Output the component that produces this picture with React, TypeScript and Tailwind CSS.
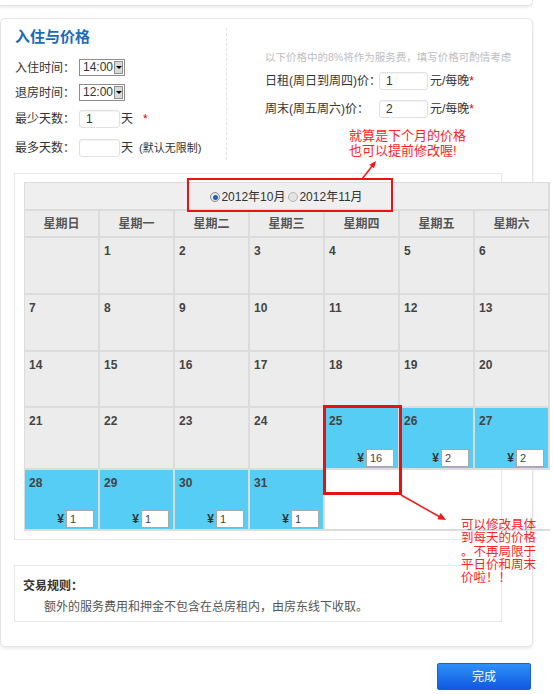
import React from 'react';

type Cell = { d?: number; price?: string; kind: 'gray' | 'blue' | 'empty' };

const weekdays = ['星期日', '星期一', '星期二', '星期三', '星期四', '星期五', '星期六'];

const g = (d?: number): Cell => ({ d, kind: 'gray' });
const b = (d: number, price: string): Cell => ({ d, price, kind: 'blue' });
const e = (): Cell => ({ kind: 'empty' });

const rows: { h: string; cells: Cell[] }[] = [
  { h: 'h-[57px]', cells: [g(), g(1), g(2), g(3), g(4), g(5), g(6)] },
  { h: 'h-[57px]', cells: [g(7), g(8), g(9), g(10), g(11), g(12), g(13)] },
  { h: 'h-[56px]', cells: [g(14), g(15), g(16), g(17), g(18), g(19), g(20)] },
  { h: 'h-[62px]', cells: [g(21), g(22), g(23), g(24), b(25, '16'), b(26, '2'), b(27, '2')] },
  { h: 'h-[61px]', cells: [b(28, '1'), b(29, '1'), b(30, '1'), b(31, '1'), e(), e(), e()] },
];

function FakeSelect({ value }: { value: string }) {
  return (
    <div className="flex h-[17px] w-[46px] items-stretch border border-[#8c8c8c] bg-white">
      <span className="flex-1 pl-[3px] text-[12px] leading-[15px] text-[#333]">{value}</span>
      <span className="m-[1px] flex w-[12px] items-center justify-center border border-[#8f8f8f] bg-[#d9d9d9]">
        <span className="h-0 w-0 border-x-[3px] border-t-[3px] border-x-transparent border-t-black" />
      </span>
    </div>
  );
}

function TextBox({ value, w }: { value?: string; w: string }) {
  return (
    <div
      className={`${w} h-[18px] rounded-[3px] border border-[#e1e1e1] bg-white pl-[6px] text-[12px] leading-[16px] text-[#333] shadow-[inset_0_1px_1px_rgba(0,0,0,0.05)]`}
    >
      {value}
    </div>
  );
}

function Radio({ checked }: { checked?: boolean }) {
  return (
    <span
      className={`flex h-[10px] w-[10px] items-center justify-center rounded-full border ${
        checked ? 'border-[#8a8a8a] bg-[#e8e8e8]' : 'border-[#b5b5b5] bg-[#e4e4e4]'
      }`}
    >
      {checked && <span className="h-[5px] w-[5px] rounded-full bg-[#1d5fb8]" />}
    </span>
  );
}

function DayCell({ cell }: { cell: Cell }) {
  if (cell.kind === 'empty') {
    return <div className="w-[75px] border-b-2 border-[#dcdcdc]" />;
  }
  const bg = cell.kind === 'blue' ? 'bg-[#55cdf4]' : 'bg-[#ececec]';
  return (
    <div className={`flex w-[75px] flex-col justify-between border-b-2 border-r-2 border-[#dcdcdc] ${bg}`}>
      <span className="pl-[4px] pt-[6px] text-[12px] font-bold leading-[14px] text-[#444]">{cell.d}</span>
      {cell.price && (
        <div className="flex items-center justify-end gap-[2px] pb-[1px] pr-[4px]">
          <span className="text-[12px] font-bold text-[#333]">¥</span>
          <div className="h-[18px] w-[28px] border border-[#a9a9a9] bg-white pl-[3px] text-[11px] leading-[16px] text-[#444]">
            {cell.price}
          </div>
        </div>
      )}
    </div>
  );
}

export default function App() {
  return (
    <div className="relative h-[694px] w-[553px] overflow-hidden bg-white font-['Liberation_Sans','Noto_Sans_CJK_SC',sans-serif] text-[12px] text-[#333]">
      <div className="h-[6px] w-[533px] rounded-br-[5px] border-b border-r border-[#e2e2e2] shadow-[0_2px_2px_rgba(0,0,0,0.06)]" />

      <div className="mt-[12px] h-[629px] w-[533px] rounded-[5px] border border-[#e4e4e4] shadow-[0_2px_3px_rgba(0,0,0,0.08)]">
        {/* 入住与价格 */}
        <div className="flex h-[154px] pl-[14px]">
          <div className="flex w-[211px] flex-col pt-[8px]">
            <h2 className="h-[20px] text-[15px] font-bold leading-[20px] text-[#1d6bb3]">入住与价格</h2>
            <div className="mt-[12px] flex h-[17px] items-center">
              <span className="w-[64px]">入住时间：</span>
              <FakeSelect value="14:00" />
            </div>
            <div className="mt-[8px] flex h-[17px] items-center">
              <span className="w-[64px]">退房时间：</span>
              <FakeSelect value="12:00" />
            </div>
            <div className="mt-[9px] flex h-[18px] items-center">
              <span className="w-[64px]">最少天数：</span>
              <TextBox value="1" w="w-[41px]" />
              <span className="ml-[1px]">天</span>
              <span className="ml-[10px] text-[#e60000]">*</span>
            </div>
            <div className="mt-[11px] flex h-[18px] items-center">
              <span className="w-[64px]">最多天数：</span>
              <TextBox w="w-[41px]" />
              <span className="ml-[1px]">天</span>
              <span className="ml-[6px] text-[11px]">(默认无限制)</span>
            </div>
          </div>
          <div className="mt-[9px] h-[132px] border-l border-dashed border-[#e2e2e2]" />
          <div className="flex flex-col pl-[38px] pt-[31px]">
            <p className="h-[14px] whitespace-nowrap text-[10.5px] leading-[14px] text-[#bdbdbd]">
              以下价格中的8%将作为服务费，填写价格可酌情考虑
            </p>
            <div className="mt-[8px] flex h-[18px] items-center whitespace-nowrap">
              <span className="w-[114px]">日租(周日到周四)价：</span>
              <TextBox value="1" w="w-[49px]" />
              <span className="ml-[2px]">元/每晚</span>
              <span className="text-[#e60000]">*</span>
            </div>
            <div className="mt-[10px] flex h-[18px] items-center whitespace-nowrap">
              <span className="w-[114px]">周末(周五周六)价：</span>
              <TextBox value="2" w="w-[49px]" />
              <span className="ml-[2px]">元/每晚</span>
              <span className="text-[#e60000]">*</span>
            </div>
          </div>
        </div>

        {/* calendar */}
        <div className="ml-[13px] h-[367px] w-[488px] border border-[#e6e6e6] pl-[9px] pt-[8px]">
          <div className="w-[526px] border-l border-t border-[#dcdcdc]">
            <div className="flex h-[28px] items-start justify-center border-b-2 border-r-2 border-[#dcdcdc] bg-[#efefef] pt-[7px]">
              <label className="flex items-center gap-[1px]">
                <Radio checked />
                <span className="leading-[14px]">2012年10月</span>
              </label>
              <label className="ml-[3px] flex items-center gap-[1px]">
                <Radio />
                <span className="leading-[14px]">2012年11月</span>
              </label>
            </div>
            <div className="flex h-[27px]">
              {weekdays.map(w => (
                <div
                  key={w}
                  className="flex w-[75px] items-center justify-center border-b-2 border-r-2 border-[#dcdcdc] bg-[#ececec] font-bold text-[#555]"
                >
                  {w}
                </div>
              ))}
            </div>
            {rows.map((r, i) => (
              <div key={i} className={`flex ${r.h}`}>
                {r.cells.map((c, j) => (
                  <DayCell key={j} cell={c} />
                ))}
              </div>
            ))}
          </div>
        </div>

        {/* 交易规则 */}
        <div className="ml-[13px] mt-[25px] h-[57px] w-[488px] border border-[#e6e6e6] pl-[8px] pt-[12px]">
          <p className="font-bold leading-[16px] text-[#333]">交易规则：</p>
          <p className="ml-[21px] mt-[5px] leading-[16px] text-[#555]">额外的服务费用和押金不包含在总房租内，由房东线下收取。</p>
        </div>
      </div>

      <div className="mt-[16px] flex w-[533px] justify-end pr-[2px]">
        <button className="h-[27px] w-[94px] rounded-[2px] border border-[#1a5fd8] bg-linear-to-b from-[#2f90f8] to-[#1457e2] text-[12px] text-white">
          完成
        </button>
      </div>

      {/* annotations */}
      <div className="pointer-events-none absolute left-[187px] top-[178px] h-[34px] w-[206px] border-2 border-[#ee1111]" />
      <div className="pointer-events-none absolute left-[323px] top-[405px] h-[90px] w-[79px] border-[3px] border-[#e81010]" />
      <div className="pointer-events-none absolute left-[349px] top-[129px] whitespace-nowrap text-[13px] leading-[14.5px] text-[#ff2424]">
        <p>就算是下个月的价格</p>
        <p>也可以提前修改喔!</p>
      </div>
      <div className="pointer-events-none absolute left-[461px] top-[519px] whitespace-nowrap text-[12.5px] leading-[13.3px] text-[#ff2424]">
        <p>可以修改具体</p>
        <p>到每天的价格</p>
        <p>。不再局限于</p>
        <p>平日价和周末</p>
        <p>价啦！！</p>
      </div>
      <svg className="pointer-events-none absolute left-0 top-0" width="553" height="694">
        <line x1="362" y1="179" x2="373" y2="165" stroke="#f01818" strokeWidth="1.5" />
        <polygon points="376,161 374.1,168.3 369.3,164.7" fill="#f01818" />
        <line x1="401" y1="495" x2="440" y2="517" stroke="#f01818" strokeWidth="1.5" />
        <polygon points="446,520 437.3,519.2 440.7,513" fill="#f01818" />
      </svg>
    </div>
  );
}
